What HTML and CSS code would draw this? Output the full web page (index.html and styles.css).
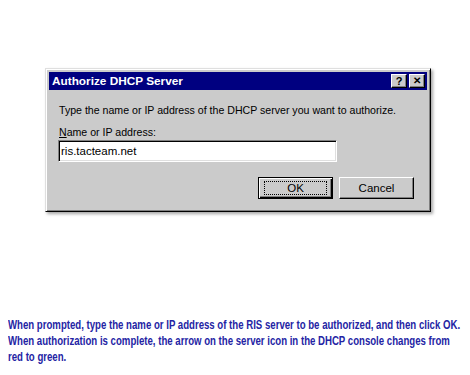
FILE: index.html
```html
<!DOCTYPE html>
<html lang="en">
  <head>
    <meta charset="UTF-8" />
    <title>Authorize DHCP Server</title>
    <link rel="stylesheet" href="styles.css">
  </head>
  <body>
    <!-- Dialog -->
    <div class="window">
      <div class="title-bar">
        <span class="title">Authorize DHCP Server</span>
        <div class="title-buttons">
          <span class="title-btn">?</span>
          <span class="title-btn close">&#x2715;</span>
        </div>
      </div>

      <div class="content">
        <p class="prompt">Type the name or IP address of the DHCP server you want to authorize.</p>
        <p class="label"><u>N</u>ame or IP address:</p>
        <div class="input">ris.tacteam.net</div>

        <!-- Buttons -->
        <div class="button-row">
          <div class="button default"><span class="focus">OK</span></div>
          <div class="button">Cancel</div>
        </div>
      </div>
    </div>

    <!-- Caption -->
    <div class="caption">
      <p class="caption-line">When prompted, type the name or IP address of the RIS server to be authorized, and then click OK.</p>
      <p class="caption-line">When authorization is complete, the arrow on the server icon in the DHCP console changes from</p>
      <p class="caption-line">red to green.</p>
    </div>
  </body>
</html>
```

FILE: styles.css
```css
* {
  margin: 0;
  padding: 0;
  box-sizing: border-box;
}
body {
  background-color: #fff;
  font-family: "Liberation Sans", Arial, sans-serif;
  overflow: hidden;
}

.window {
  margin: 68px 0 0 45px;
  width: 386px;
  height: 144px;
  padding: 3px;
  background-color: #cbcbcb;
  border: 1px solid;
  border-color: #dfdfdf #000 #000 #dfdfdf;
  box-shadow: inset 1px 1px #fff, inset -1px -1px #808080,
    2px 2px 3px rgba(0, 0, 0, 0.35);
}

.title-bar {
  height: 18px;
  background-color: #000080;
  display: flex;
  align-items: center;
  justify-content: space-between;
  padding: 0 2px 0 3px;
}
.title {
  color: #fff;
  font-weight: bold;
  font-size: 11.8px;
}
.title-buttons {
  display: flex;
  gap: 2px;
}
.title-btn {
  width: 16px;
  height: 14px;
  background-color: #cbcbcb;
  border: 1px solid;
  border-color: #fff #000 #000 #fff;
  box-shadow: inset -1px -1px #808080;
  font-size: 11px;
  font-weight: bold;
  line-height: 12px;
  text-align: center;
  color: #000;
}
.title-btn.close {
  font-size: 10px;
}

.content {
  padding: 13px 13px 0 10px;
  font-size: 10.6px;
  color: #000;
}
.prompt {
  line-height: 14px;
}
.label {
  line-height: 14px;
  margin-top: 8px;
}
.input {
  width: 279px;
  height: 22px;
  margin-top: 1px;
  margin-left: -1px;
  background-color: #fff;
  border: 1px solid;
  border-color: #808080 #fff #fff #808080;
  box-shadow: inset 1px 1px #000, inset -1px -1px #dfdfdf;
  padding: 0 2px;
  line-height: 20px;
  font-size: 11.5px;
}

.button-row {
  display: flex;
  justify-content: flex-end;
  gap: 6px;
  margin-top: 15px;
}
.button {
  width: 75px;
  height: 22px;
  border: 1px solid;
  border-color: #fff #000 #000 #fff;
  box-shadow: inset -1px -1px #808080;
  display: flex;
  align-items: center;
  justify-content: center;
  font-size: 11.5px;
}
.button.default {
  border: 1px solid #000;
  box-shadow: inset 1px 1px #fff, inset -1px -1px #000, inset -2px -2px #808080;
}
.focus {
  width: 63px;
  height: 14px;
  border: 1px dotted #000;
  display: flex;
  align-items: center;
  justify-content: center;
}

.caption {
  margin-top: 105px;
  padding-left: 8px;
  font-weight: bold;
  font-size: 13px;
  line-height: 16px;
  color: #2424a4;
}
.caption-line {
  white-space: nowrap;
  transform: scaleX(0.74);
  transform-origin: left center;
}
```
